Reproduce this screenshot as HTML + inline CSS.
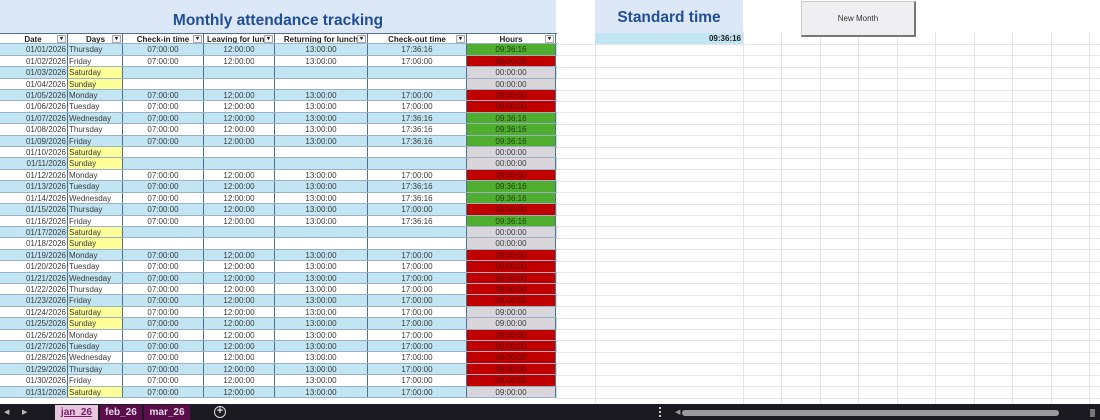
<!DOCTYPE html>
<html><head><meta charset="utf-8"><style>
*{margin:0;padding:0;box-sizing:border-box}
body{width:1100px;height:420px;overflow:hidden;background:#fff;font-family:"Liberation Sans",sans-serif;position:relative}
.vl{position:absolute;top:32px;height:372px;width:1px;background:#e6e6e8}
.hl{position:absolute;left:556px;right:0;height:1px;background:#e6e6e8}
#top{position:absolute;left:0;top:0;width:556px;height:33px;background:#dce8f7}
#title{position:absolute;left:0;width:556px;top:12px;text-align:center;font-weight:bold;font-size:15.5px;color:#1f4e96}
#tbl{position:absolute;left:0;top:33px;width:557px}
.r{display:grid;grid-template-columns:68px 55px 81px 71px 93px 99px 89px;height:11.42px;font-size:8px;line-height:11px;color:#3a3a3a;border-bottom:1px solid #9ab0c4}
.r>div{border-right:1px solid #4f6f8c;overflow:hidden;white-space:nowrap;text-align:center}
.r>div:first-child{text-align:right;padding-right:1px}
.r>div:nth-child(2){text-align:left;padding-left:1px}
.b{background:#c2e5f3}
.h{background:#fff;font-weight:bold;color:#222;border-top:1px solid #4f6f8c}
.h>div{position:relative}
.h>div:first-child,.h>div:nth-child(2){text-align:center!important}
.h>div span{position:absolute;right:1px;top:1px;width:9px;height:8px;border:1px solid #aaa;background:#f4f4f4;font-size:6px;line-height:6px;text-align:center}
.y{background:#ffff99!important}
.g{background:#4fae2e!important;color:#1d3d10}
.rd{background:#c00000!important;color:#5a0000}
.n{background:#d9d6db!important}
#st{position:absolute;left:595px;top:0;width:148px;height:33px;background:#dce8f7;text-align:center;font-weight:bold;font-size:15.5px;color:#1f4e96;padding-top:9px}
#stv{position:absolute;left:595px;top:33px;width:148px;height:11px;background:#c2e5f3;font-size:8px;font-weight:bold;text-align:right;padding-right:2px;line-height:11px;color:#222}
#btn{position:absolute;left:801px;top:1px;width:115px;height:36px;background:#efeef1;border:1px solid #ccc;border-right:2px solid #777;border-bottom:2px solid #777;font-size:8px;text-align:center;line-height:33px;color:#333}
#bar{position:absolute;left:0;top:404px;width:1100px;height:16px;background:#1b1a20}
.tab{position:absolute;top:405px;height:15px;font-size:10px;font-weight:bold;line-height:15px;text-align:center}
</style></head><body>
<div class="vl" style="left:595px"></div><div class="vl" style="left:743px"></div><div class="vl" style="left:781px"></div><div class="vl" style="left:820px"></div><div class="vl" style="left:858px"></div><div class="vl" style="left:897px"></div><div class="vl" style="left:935px"></div><div class="vl" style="left:974px"></div><div class="vl" style="left:1012px"></div><div class="vl" style="left:1051px"></div><div class="vl" style="left:1089px"></div>
<div class="hl" style="top:44px"></div><div class="hl" style="top:55px"></div><div class="hl" style="top:67px"></div><div class="hl" style="top:78px"></div><div class="hl" style="top:90px"></div><div class="hl" style="top:101px"></div><div class="hl" style="top:112px"></div><div class="hl" style="top:124px"></div><div class="hl" style="top:135px"></div><div class="hl" style="top:147px"></div><div class="hl" style="top:158px"></div><div class="hl" style="top:169px"></div><div class="hl" style="top:181px"></div><div class="hl" style="top:192px"></div><div class="hl" style="top:204px"></div><div class="hl" style="top:215px"></div><div class="hl" style="top:226px"></div><div class="hl" style="top:238px"></div><div class="hl" style="top:249px"></div><div class="hl" style="top:261px"></div><div class="hl" style="top:272px"></div><div class="hl" style="top:283px"></div><div class="hl" style="top:295px"></div><div class="hl" style="top:306px"></div><div class="hl" style="top:318px"></div><div class="hl" style="top:329px"></div><div class="hl" style="top:340px"></div><div class="hl" style="top:352px"></div><div class="hl" style="top:363px"></div><div class="hl" style="top:375px"></div><div class="hl" style="top:386px"></div><div class="hl" style="top:398px"></div>
<div id="top"></div><div id="title">Monthly attendance tracking</div>
<div id="st">Standard time</div><div id="stv">09:36:16</div>
<div id="btn">New Month</div>
<div id="tbl">
<div class="r h"><div>Date<span>▾</span></div><div>Days<span>▾</span></div><div>Check-in time<span>▾</span></div><div style="text-align:left;padding-left:3px">Leaving for lunc<span>▾</span></div><div>Returning for lunch<span>▾</span></div><div>Check-out time<span>▾</span></div><div>Hours<span>▾</span></div></div>
<div class="r b"><div>01/01/2026</div><div>Thursday</div><div>07:00:00</div><div>12:00:00</div><div>13:00:00</div><div>17:36:16</div><div class="g">09:36:16</div></div>
<div class="r"><div>01/02/2026</div><div>Friday</div><div>07:00:00</div><div>12:00:00</div><div>13:00:00</div><div>17:00:00</div><div class="rd">09:00:00</div></div>
<div class="r b"><div>01/03/2026</div><div class="y">Saturday</div><div></div><div></div><div></div><div></div><div class="n">00:00:00</div></div>
<div class="r"><div>01/04/2026</div><div class="y">Sunday</div><div></div><div></div><div></div><div></div><div class="n">00:00:00</div></div>
<div class="r b"><div>01/05/2026</div><div>Monday</div><div>07:00:00</div><div>12:00:00</div><div>13:00:00</div><div>17:00:00</div><div class="rd">09:00:00</div></div>
<div class="r"><div>01/06/2026</div><div>Tuesday</div><div>07:00:00</div><div>12:00:00</div><div>13:00:00</div><div>17:00:00</div><div class="rd">09:00:00</div></div>
<div class="r b"><div>01/07/2026</div><div>Wednesday</div><div>07:00:00</div><div>12:00:00</div><div>13:00:00</div><div>17:36:16</div><div class="g">09:36:16</div></div>
<div class="r"><div>01/08/2026</div><div>Thursday</div><div>07:00:00</div><div>12:00:00</div><div>13:00:00</div><div>17:36:16</div><div class="g">09:36:16</div></div>
<div class="r b"><div>01/09/2026</div><div>Friday</div><div>07:00:00</div><div>12:00:00</div><div>13:00:00</div><div>17:36:16</div><div class="g">09:36:16</div></div>
<div class="r"><div>01/10/2026</div><div class="y">Saturday</div><div></div><div></div><div></div><div></div><div class="n">00:00:00</div></div>
<div class="r b"><div>01/11/2026</div><div class="y">Sunday</div><div></div><div></div><div></div><div></div><div class="n">00:00:00</div></div>
<div class="r"><div>01/12/2026</div><div>Monday</div><div>07:00:00</div><div>12:00:00</div><div>13:00:00</div><div>17:00:00</div><div class="rd">09:00:00</div></div>
<div class="r b"><div>01/13/2026</div><div>Tuesday</div><div>07:00:00</div><div>12:00:00</div><div>13:00:00</div><div>17:36:16</div><div class="g">09:36:16</div></div>
<div class="r"><div>01/14/2026</div><div>Wednesday</div><div>07:00:00</div><div>12:00:00</div><div>13:00:00</div><div>17:36:16</div><div class="g">09:36:16</div></div>
<div class="r b"><div>01/15/2026</div><div>Thursday</div><div>07:00:00</div><div>12:00:00</div><div>13:00:00</div><div>17:00:00</div><div class="rd">09:00:00</div></div>
<div class="r"><div>01/16/2026</div><div>Friday</div><div>07:00:00</div><div>12:00:00</div><div>13:00:00</div><div>17:36:16</div><div class="g">09:36:16</div></div>
<div class="r b"><div>01/17/2026</div><div class="y">Saturday</div><div></div><div></div><div></div><div></div><div class="n">00:00:00</div></div>
<div class="r"><div>01/18/2026</div><div class="y">Sunday</div><div></div><div></div><div></div><div></div><div class="n">00:00:00</div></div>
<div class="r b"><div>01/19/2026</div><div>Monday</div><div>07:00:00</div><div>12:00:00</div><div>13:00:00</div><div>17:00:00</div><div class="rd">09:00:00</div></div>
<div class="r"><div>01/20/2026</div><div>Tuesday</div><div>07:00:00</div><div>12:00:00</div><div>13:00:00</div><div>17:00:00</div><div class="rd">09:00:00</div></div>
<div class="r b"><div>01/21/2026</div><div>Wednesday</div><div>07:00:00</div><div>12:00:00</div><div>13:00:00</div><div>17:00:00</div><div class="rd">09:00:00</div></div>
<div class="r"><div>01/22/2026</div><div>Thursday</div><div>07:00:00</div><div>12:00:00</div><div>13:00:00</div><div>17:00:00</div><div class="rd">09:00:00</div></div>
<div class="r b"><div>01/23/2026</div><div>Friday</div><div>07:00:00</div><div>12:00:00</div><div>13:00:00</div><div>17:00:00</div><div class="rd">09:00:00</div></div>
<div class="r"><div>01/24/2026</div><div class="y">Saturday</div><div>07:00:00</div><div>12:00:00</div><div>13:00:00</div><div>17:00:00</div><div class="n">09:00:00</div></div>
<div class="r b"><div>01/25/2026</div><div class="y">Sunday</div><div>07:00:00</div><div>12:00:00</div><div>13:00:00</div><div>17:00:00</div><div class="n">09:00:00</div></div>
<div class="r"><div>01/26/2026</div><div>Monday</div><div>07:00:00</div><div>12:00:00</div><div>13:00:00</div><div>17:00:00</div><div class="rd">09:00:00</div></div>
<div class="r b"><div>01/27/2026</div><div>Tuesday</div><div>07:00:00</div><div>12:00:00</div><div>13:00:00</div><div>17:00:00</div><div class="rd">09:00:00</div></div>
<div class="r"><div>01/28/2026</div><div>Wednesday</div><div>07:00:00</div><div>12:00:00</div><div>13:00:00</div><div>17:00:00</div><div class="rd">09:00:00</div></div>
<div class="r b"><div>01/29/2026</div><div>Thursday</div><div>07:00:00</div><div>12:00:00</div><div>13:00:00</div><div>17:00:00</div><div class="rd">09:00:00</div></div>
<div class="r"><div>01/30/2026</div><div>Friday</div><div>07:00:00</div><div>12:00:00</div><div>13:00:00</div><div>17:00:00</div><div class="rd">09:00:00</div></div>
<div class="r b"><div>01/31/2026</div><div class="y">Saturday</div><div>07:00:00</div><div>12:00:00</div><div>13:00:00</div><div>17:00:00</div><div class="n">09:00:00</div></div>
</div>
<div id="bar"></div>
<div style="position:absolute;left:4px;top:408px;color:#bbb;font-size:7px">◀</div>
<div style="position:absolute;left:22px;top:408px;color:#bbb;font-size:7px">▶</div>
<div class="tab" style="left:55px;width:43px;background:#e6c7de;color:#7a1c6c;text-decoration:underline">jan_26</div>
<div class="tab" style="left:100px;width:42px;background:#5a0d4b;color:#e8d8e6">feb_26</div>
<div class="tab" style="left:144px;width:46px;background:#5a0d4b;color:#e8d8e6">mar_26</div>
<div style="position:absolute;left:214px;top:406px;width:12px;height:12px;border:1.5px solid #ddd;border-radius:50%;color:#ddd;font-size:11px;line-height:9px;text-align:center;font-weight:bold">+</div>
<div style="position:absolute;left:659px;top:407px;width:2px;height:10px;border-left:2px dotted #ccc"></div>
<div style="position:absolute;left:675px;top:408px;color:#999;font-size:7px">◀</div>
<div style="position:absolute;left:682px;top:410px;width:377px;height:6px;border-radius:3px;background:#9b9b9d"></div>
<div style="position:absolute;left:1090px;top:409px;width:5px;height:8px;background:#777"></div>
</body></html>
